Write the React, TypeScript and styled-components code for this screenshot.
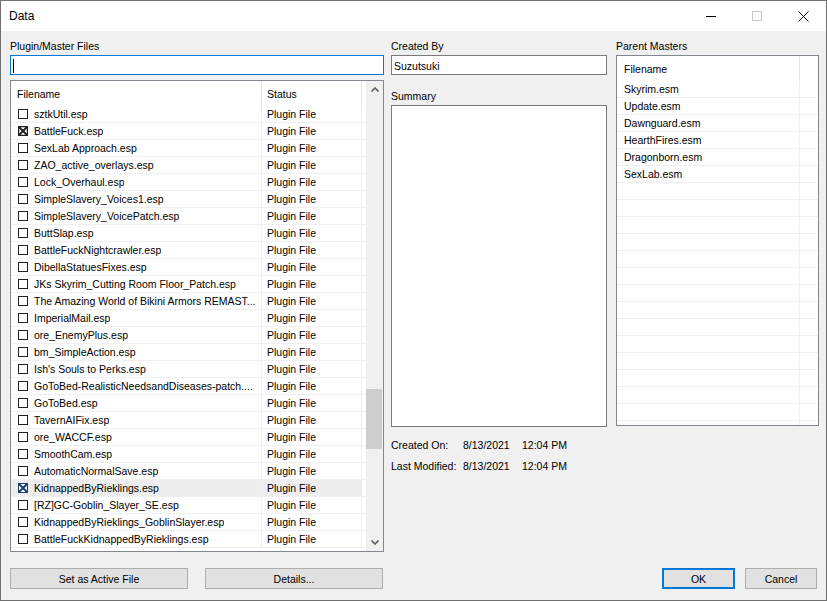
import React from "react";
import styled, { createGlobalStyle } from "styled-components";

const Global = createGlobalStyle`
  html, body { margin: 0; padding: 0; background: #f0f0f0; }
  body { font-family: "Liberation Sans", Arial, sans-serif; font-size: 10.5px; color: #000; }
  * { box-sizing: border-box; }
`;

const Window = styled.div`
  width: 827px;
  height: 601px;
  border: 1px solid #707070;
  background: #f0f0f0;
  display: flex;
  flex-direction: column;
  overflow: hidden;
`;

const TitleBar = styled.div`
  height: 30px;
  background: #fff;
  display: flex;
  align-items: center;
  flex-shrink: 0;
`;

const Title = styled.div`
  padding-left: 8px;
  font-size: 12px;
  flex: 1;
`;

const CaptionButton = styled.div`
  width: 46px;
  height: 30px;
  display: flex;
  align-items: center;
  justify-content: center;
`;

const Body = styled.div`
  flex: 1;
  display: flex;
  flex-direction: column;
  padding: 8px 7px 0 9px;
`;

const Columns = styled.div`
  display: flex;
  align-items: flex-start;
`;

const Column = styled.div<{ $w: number; $ml?: number }>`
  width: ${(p) => p.$w}px;
  margin-left: ${(p) => p.$ml ?? 0}px;
  display: flex;
  flex-direction: column;
`;

const Label = styled.div<{ $mt?: number }>`
  height: 13px;
  line-height: 15px;
  margin-top: ${(p) => p.$mt ?? 0}px;
  margin-bottom: 3px;
  white-space: nowrap;
`;

const TextBox = styled.div<{ $focus?: boolean }>`
  height: 20px;
  background: #fff;
  border: 1px solid ${(p) => (p.$focus ? "#0078d7" : "#7a7a7a")};
  padding-left: 2px;
  padding-top: 1px;
  line-height: 18px;
  display: flex;
  align-items: center;
`;

const Caret = styled.span`
  width: 1px;
  height: 14px;
  background: #000;
`;

const ListBox = styled.div<{ $h: number; $mt?: number }>`
  height: ${(p) => p.$h}px;
  margin-top: ${(p) => p.$mt ?? 0}px;
  background: #fff;
  border: 1px solid #828790;
  display: flex;
  overflow: hidden;
`;

const ListContent = styled.div`
  flex: 1;
  display: flex;
  flex-direction: column;
  overflow: hidden;
`;

const HeaderRow = styled.div`
  height: 25px;
  display: flex;
  flex-shrink: 0;
`;

const HeaderCell = styled.div<{ $w?: number; $pl: number; $last?: boolean }>`
  ${(p) => (p.$w ? `width: ${p.$w}px;` : "flex: 1;")}
  padding-left: ${(p) => p.$pl}px;
  line-height: 27px;
  border-right: ${(p) => (p.$last ? "none" : "1px solid #e5e5e5")};
  white-space: nowrap;
`;

const Row = styled.div`
  height: 17px;
  display: flex;
  flex-shrink: 0;
  border-bottom: 1px solid #f0f0f0;
`;

const Cell = styled.div<{ $w?: number; $pl: number; $sel?: boolean; $last?: boolean }>`
  ${(p) => (p.$w ? `width: ${p.$w}px; flex-shrink: 0;` : "flex: 1;")}
  padding-left: ${(p) => p.$pl}px;
  padding-right: 3px;
  padding-top: 1px;
  border-right: ${(p) => (p.$last ? "none" : "1px solid #f0f0f0")};
  background: ${(p) => (p.$sel ? "#ededed" : "transparent")};
  line-height: 15px;
  display: flex;
  align-items: center;
  white-space: nowrap;
  overflow: hidden;
`;

const Ellip = styled.span`
  overflow: hidden;
  white-space: nowrap;
`;

const CheckWrap = styled.span`
  width: 10px;
  height: 10px;
  margin-right: 6px;
  margin-top: -1px;
  display: inline-flex;
  flex-shrink: 0;
`;

const ScrollBar = styled.div`
  width: 17px;
  background: #f0f0f0;
  display: flex;
  flex-direction: column;
  flex-shrink: 0;
`;

const ScrollArrow = styled.div<{ $bottom?: boolean }>`
  height: 17px;
  display: flex;
  align-items: center;
  justify-content: center;
  margin-top: ${(p) => (p.$bottom ? "auto" : "0")};
  flex-shrink: 0;
`;

const Thumb = styled.div<{ $top: number; $h: number }>`
  margin: ${(p) => p.$top}px 1px 0 0;
  height: ${(p) => p.$h}px;
  background: #cdcdcd;
  flex-shrink: 0;
`;

const TextArea = styled.div`
  height: 322px;
  background: #fff;
  border: 1px solid #7a7a7a;
`;

const InfoRow = styled.div<{ $mt?: number }>`
  display: grid;
  grid-template-columns: 72px 59px 1fr;
  height: 21px;
  line-height: 22px;
  margin-top: ${(p) => p.$mt ?? 0}px;
  white-space: nowrap;
`;

const ButtonBar = styled.div`
  margin-top: 16px;
  display: flex;
  align-items: flex-start;
`;

const ButtonGroup = styled.div<{ $gap: number; $right?: boolean }>`
  display: flex;
  gap: ${(p) => p.$gap}px;
  margin-left: ${(p) => (p.$right ? "auto" : "0")};
  margin-right: ${(p) => (p.$right ? "2px" : "0")};
`;

const Button = styled.button<{ $w: number; $primary?: boolean }>`
  width: ${(p) => p.$w}px;
  height: 21px;
  padding: 1px 0 0;
  background: #e1e1e1;
  border: ${(p) => (p.$primary ? "2px solid #0078d7" : "1px solid #adadad")};
  font-family: "Liberation Sans", Arial, sans-serif;
  font-size: 10.5px;
  color: #000;
`;

const files: [string, number][] = [
  ["sztkUtil.esp", 0],
  ["BattleFuck.esp", 1],
  ["SexLab Approach.esp", 0],
  ["ZAO_active_overlays.esp", 0],
  ["Lock_Overhaul.esp", 0],
  ["SimpleSlavery_Voices1.esp", 0],
  ["SimpleSlavery_VoicePatch.esp", 0],
  ["ButtSlap.esp", 0],
  ["BattleFuckNightcrawler.esp", 0],
  ["DibellaStatuesFixes.esp", 0],
  ["JKs Skyrim_Cutting Room Floor_Patch.esp", 0],
  ["The Amazing World of Bikini Armors REMAST...", 0],
  ["ImperialMail.esp", 0],
  ["ore_EnemyPlus.esp", 0],
  ["bm_SimpleAction.esp", 0],
  ["Ish's Souls to Perks.esp", 0],
  ["GoToBed-RealisticNeedsandDiseases-patch....", 0],
  ["GoToBed.esp", 0],
  ["TavernAIFix.esp", 0],
  ["ore_WACCF.esp", 0],
  ["SmoothCam.esp", 0],
  ["AutomaticNormalSave.esp", 0],
  ["KidnappedByRieklings.esp", 2],
  ["[RZ]GC-Goblin_Slayer_SE.esp", 0],
  ["KidnappedByRieklings_GoblinSlayer.esp", 0],
  ["BattleFuckKidnappedByRieklings.esp", 0],
];

const masters = ["Skyrim.esm", "Update.esm", "Dawnguard.esm", "HearthFires.esm", "Dragonborn.esm", "SexLab.esm"];

function CheckBox({ state }: { state: number }) {
  const color = state === 2 ? "#1c3f72" : "#222";
  return (
    <CheckWrap>
      <svg width="10" height="10" viewBox="0 0 10 10">
        <rect x="0.5" y="0.5" width="9" height="9" fill="#fff" stroke={color} strokeWidth="1" />
        {state > 0 && (
          <>
            <path d="M1 1 L9 9 M9 1 L1 9" stroke={color} strokeWidth="2" />
            <rect x="0.5" y="0.5" width="9" height="9" fill="none" stroke={color} strokeWidth={state === 1 ? 1.5 : 1} />
          </>
        )}
      </svg>
    </CheckWrap>
  );
}

export default function App() {
  const emptyMasters = Array.from({ length: 16 });
  return (
    <>
      <Global />
      <Window>
        <TitleBar>
          <Title>Data</Title>
          <CaptionButton>
            <svg width="10" height="10" viewBox="0 0 10 10">
              <path d="M0 5.5 H10" stroke="#000" strokeWidth="1" />
            </svg>
          </CaptionButton>
          <CaptionButton>
            <svg width="10" height="10" viewBox="0 0 10 10">
              <rect x="0.5" y="0.5" width="9" height="9" fill="none" stroke="#c8c8c8" strokeWidth="1" />
            </svg>
          </CaptionButton>
          <CaptionButton>
            <svg width="11" height="11" viewBox="0 0 11 11">
              <path d="M0.5 0.5 L10.5 10.5 M10.5 0.5 L0.5 10.5" stroke="#000" strokeWidth="1" />
            </svg>
          </CaptionButton>
        </TitleBar>
        <Body>
          <Columns>
            <Column $w={374}>
              <Label>Plugin/Master Files</Label>
              <TextBox $focus>
                <Caret />
              </TextBox>
              <ListBox $h={472} $mt={5}>
                <ListContent>
                  <HeaderRow>
                    <HeaderCell $w={251} $pl={6}>Filename</HeaderCell>
                    <HeaderCell $w={100} $pl={5}>Status</HeaderCell>
                    <HeaderCell $pl={0} $last />
                  </HeaderRow>
                  {files.map(([name, st]) => (
                    <Row key={name}>
                      <Cell $w={251} $pl={7} $sel={st === 2}>
                        <CheckBox state={st} />
                        <Ellip>{name}</Ellip>
                      </Cell>
                      <Cell $w={100} $pl={5} $sel={st === 2}>Plugin File</Cell>
                      <Cell $pl={0} $last />
                    </Row>
                  ))}
                </ListContent>
                <ScrollBar>
                  <ScrollArrow>
                    <svg width="8" height="5" viewBox="0 0 8 5">
                      <path d="M0.5 4.5 L4 1 L7.5 4.5" fill="none" stroke="#606060" strokeWidth="1.6" />
                    </svg>
                  </ScrollArrow>
                  <Thumb $top={291} $h={60} />
                  <ScrollArrow $bottom>
                    <svg width="8" height="5" viewBox="0 0 8 5">
                      <path d="M0.5 0.5 L4 4 L7.5 0.5" fill="none" stroke="#606060" strokeWidth="1.6" />
                    </svg>
                  </ScrollArrow>
                </ScrollBar>
              </ListBox>
            </Column>
            <Column $w={216} $ml={7}>
              <Label>Created By</Label>
              <TextBox>Suzutsuki</TextBox>
              <Label $mt={14}>Summary</Label>
              <TextArea />
              <InfoRow $mt={7}>
                <span>Created On:</span>
                <span>8/13/2021</span>
                <span>12:04 PM</span>
              </InfoRow>
              <InfoRow>
                <span>Last Modified:</span>
                <span>8/13/2021</span>
                <span>12:04 PM</span>
              </InfoRow>
            </Column>
            <Column $w={203} $ml={9}>
              <Label>Parent Masters</Label>
              <ListBox $h={371}>
                <ListContent>
                  <HeaderRow>
                    <HeaderCell $w={183} $pl={7}>Filename</HeaderCell>
                    <HeaderCell $pl={0} $last />
                  </HeaderRow>
                  {masters.map((m) => (
                    <Row key={m}>
                      <Cell $w={183} $pl={7}>{m}</Cell>
                      <Cell $pl={0} $last />
                    </Row>
                  ))}
                  {emptyMasters.map((_, i) => (
                    <Row key={"e" + i}>
                      <Cell $w={183} $pl={7} />
                      <Cell $pl={0} $last />
                    </Row>
                  ))}
                </ListContent>
              </ListBox>
            </Column>
          </Columns>
          <ButtonBar>
            <ButtonGroup $gap={17}>
              <Button $w={178}>Set as Active File</Button>
              <Button $w={178}>Details...</Button>
            </ButtonGroup>
            <ButtonGroup $gap={10} $right>
              <Button $w={73} $primary>OK</Button>
              <Button $w={72}>Cancel</Button>
            </ButtonGroup>
          </ButtonBar>
        </Body>
      </Window>
    </>
  );
}
